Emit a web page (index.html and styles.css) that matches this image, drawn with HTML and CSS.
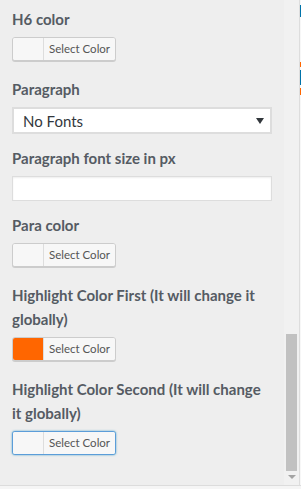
FILE: index.html
```html
<!DOCTYPE html>
<html lang="en">
<head>
  <meta charset="UTF-8" />
  <meta name="viewport" content="width=device-width, initial-scale=1.0" />
  <title>Typography settings</title>
  <link rel="stylesheet" href="styles.css">
</head>
<body>
  <div class="frame">
    <div class="panel">
      <div class="field color-field">
        <label class="label">H6 color</label>
        <button class="color-btn"><span class="swatch"></span><span class="color-text">Select Color</span></button>
      </div>

      <div class="field">
        <label class="label">Paragraph</label>
        <div class="select">
          <span>No Fonts</span>
          <span class="caret"></span>
        </div>
      </div>

      <div class="field">
        <label class="label">Paragraph font size in px</label>
        <input class="text-input" type="text">
      </div>

      <div class="field color-field">
        <label class="label">Para color</label>
        <button class="color-btn"><span class="swatch"></span><span class="color-text">Select Color</span></button>
      </div>

      <div class="field color-field">
        <label class="label">Highlight Color First (It will change it globally)</label>
        <button class="color-btn"><span class="swatch orange"></span><span class="color-text">Select Color</span></button>
      </div>

      <div class="field color-field">
        <label class="label">Highlight Color Second (It will change it globally)</label>
        <button class="color-btn focused"><span class="swatch"></span><span class="color-text">Select Color</span></button>
      </div>
    </div>

    <div class="scrollbar">
      <div class="thumb"></div>
      <div class="arrow"></div>
    </div>

    <div class="edge">
      <span class="mark blue m1"></span>
      <span class="mark orange-mark m2"></span>
      <span class="mark blue m3"></span>
      <span class="mark orange-mark m4"></span>
    </div>
  </div>
  <div class="bottom"></div>
</body>
</html>
```

FILE: styles.css
```css
html, body {
  margin: 0;
  padding: 0;
  height: 100%;
  overflow: hidden;
  background: #f5f5f5;
  font-family: Lato, 'Open Sans', sans-serif;
}
.frame {
  display: flex;
  height: 485px;
  border-bottom: 1px solid #dcdcdc;
  background: #eeeeee;
}
.panel {
  width: 260px;
  padding: 7px 12px 0 12px;
  overflow: hidden;
}
.field {
  margin-bottom: 12px;
}
.color-field {
  margin-bottom: 16px;
}
.label {
  display: block;
  font-size: 15px;
  font-weight: 700;
  line-height: 24px;
  color: #555b63;
  margin-bottom: 6px;
  width: 255px;
}
.color-btn {
  display: flex;
  align-items: stretch;
  width: 104px;
  height: 24px;
  padding: 0;
  margin: 0;
  border: 1px solid #cccccc;
  border-radius: 3px;
  background: #f7f7f7;
  box-shadow: 0 1px 0 #cccccc;
  overflow: hidden;
  cursor: pointer;
}
.color-btn.focused {
  border-color: #5b9dd9;
  box-shadow: 0 0 2px rgba(30, 140, 190, 0.8);
}
.swatch {
  width: 30px;
  background: #f7f7f7;
}
.swatch.orange {
  background: #ff6600;
}
.color-text {
  flex: 1;
  border-left: 1px solid #dddddd;
  background: #f7f7f7;
  color: #555555;
  font-family: Lato, 'Open Sans', sans-serif;
  font-size: 11.5px;
  line-height: 22px;
  text-align: center;
}
.select {
  display: flex;
  align-items: center;
  justify-content: space-between;
  height: 23px;
  padding: 0 6px 0 9px;
  border: 2px solid #dddddd;
  background: #ffffff;
  font-size: 15px;
  color: #32373c;
}
.caret {
  width: 0;
  height: 0;
  border-left: 4px solid transparent;
  border-right: 4px solid transparent;
  border-top: 6px solid #32373c;
}
.text-input {
  display: block;
  box-sizing: border-box;
  width: 260px;
  height: 25px;
  margin: 0;
  border: 1px solid #dddddd;
  background: #ffffff;
  box-shadow: inset 0 1px 2px rgba(0, 0, 0, 0.07);
}
.scrollbar {
  width: 15px;
  background: #f1f1f1;
  display: flex;
  flex-direction: column;
  align-items: center;
  padding-top: 334px;
  box-sizing: border-box;
}
.thumb {
  width: 11px;
  height: 137px;
  background: #c1c1c1;
}
.arrow {
  margin-top: 4px;
  width: 0;
  height: 0;
  border-left: 4px solid transparent;
  border-right: 4px solid transparent;
  border-top: 4px solid #a3a3a3;
}
.edge {
  position: relative;
  width: 1px;
  border-left: 1px solid #dddddd;
  background: #f7f7f7;
}
.mark {
  position: absolute;
  left: 0;
  width: 1px;
}
.blue {
  background: #0073aa;
}
.orange-mark {
  background: #ff6600;
}
.m1 { top: 5px; height: 12px; }
.m2 { top: 62px; height: 5px; }
.m3 { top: 70px; height: 15px; }
.m4 { top: 88px; height: 7px; }
.bottom {
  height: 3px;
  background: #f5f5f5;
}
```
